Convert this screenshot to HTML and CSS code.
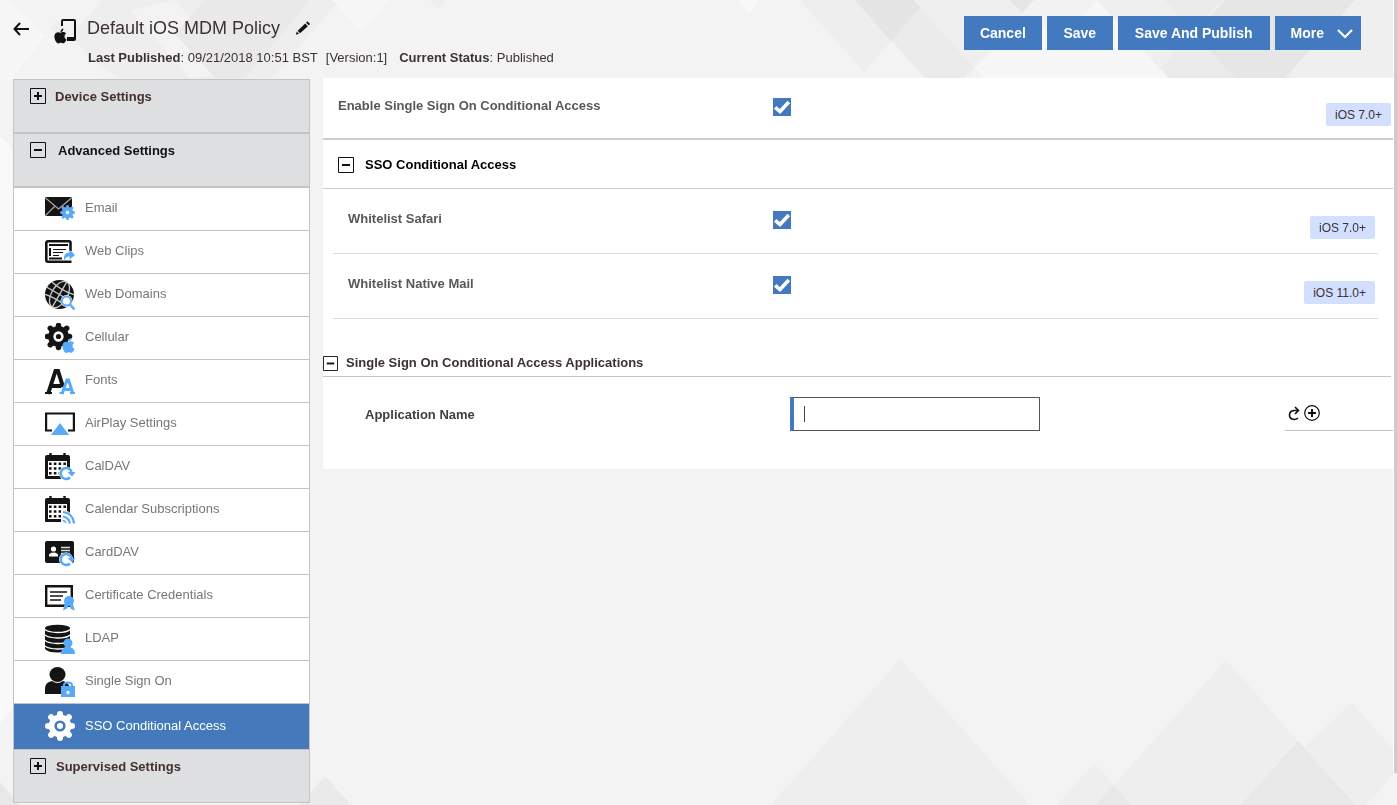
FILE: index.html
```html
<!DOCTYPE html>
<html lang="en">
<head>
<meta charset="utf-8">
<title>Default iOS MDM Policy</title>
<link rel="stylesheet" href="styles.css">
</head>
<body>
<svg class="backdrop" viewBox="0 0 1397 805" preserveAspectRatio="xMidYMid slice" aria-hidden="true">
  <rect width="1397" height="805" fill="#f3f3f3"/>
  <path fill="#eee" d="M12 0H340L270 80H120z"/>
  <path fill="#f7f7f7" d="M0 0H8L96 80H0zM332 0H390L361 32z"/>
  <path fill="#f3f3f3" d="M12 0 57 50 103 0zM13 78 57 20 108 78zM190 78 130 10 175 0 240 72z"/>
  <path fill="#e9e9e9" d="M205 0 175 34 215 78H245L310 0z"/>
  <path fill="#eee" d="M430 0H446L438 9z"/>
  <path fill="#f8f8f8" d="M738 0H760L749 13z"/>
  <path fill="#eee" d="M800 0H927L864 72z"/>
  <path fill="#ebebeb" d="M855 0H914L984 78H925z"/>
  <path fill="#e5e5e5" d="M855 0H927L891 41z"/>
  <path fill="#efefef" d="M914 0H1393V78H984z"/>
  <path fill="#e5e5e5" d="M1010 0H1034L1022 13z"/>
  <path fill="#f2f2f2" d="M1034 0H1097L1040 78H965z"/>
  <path fill="#f7f7f7" d="M1097 0 1168 78H983L975 68 1030 16 1060 40z"/>
  <path fill="#ebebeb" d="M1165 0H1222L1162 68 1170 78H1235z"/>
  <path fill="#e6e6e6" d="M1225 0H1355L1285 78H1235L1195 34z"/>
  <path fill="#eee" d="M900 659 1030 805H771zM1226 660 1355 805H1096zM1352 703 1397 753V770L1366 805H1241zM1094 763 1131 805H1057z"/>
  <path fill="#e8e8e8" d="M1298 741 1355 805H1241zM1113 785 1131 805H1096zM0 782 20 805H0z"/>
  <path fill="#eaeaea" d="M325 776 351 805H299z"/>
  <path fill="#f9f9f9" d="M0 135 13 150V709L0 723z"/>
</svg>

<svg class="defs" aria-hidden="true">
  <defs>
    <g id="gear-shape">
      <circle r="8.500" fill="none" stroke="currentColor" stroke-width="5.800"/>
      <g stroke="currentColor" stroke-width="6" stroke-linecap="round">
        <path d="M0-10V-12M0 10V12M10 0H12M-10 0H-12M7.500-7.500 8.900-8.900M-7.500-7.500-8.900-8.900M7.500 7.500 8.900 8.900M-7.500 7.500-8.900 8.900"/>
      </g>
    </g>
    <path id="apple" d="M12.152 6.896c-.948 0-2.415-1.078-3.96-1.040-2.040.027-3.910 1.183-4.961 3.014-2.117 3.675-.546 9.103 1.519 12.090 1.013 1.454 2.208 3.090 3.792 3.039 1.520-.065 2.090-.987 3.935-.987 1.831 0 2.350.987 3.960.948 1.637-.026 2.676-1.480 3.676-2.948 1.156-1.688 1.636-3.325 1.662-3.415-.039-.013-3.182-1.221-3.220-4.857-.026-3.040 2.480-4.494 2.597-4.559-1.429-2.090-3.623-2.324-4.390-2.376-2-.156-3.675 1.090-4.610 1.090zM15.530 3.830c.843-1.012 1.400-2.427 1.245-3.830-1.207.052-2.662.805-3.532 1.818-.78.896-1.454 2.338-1.273 3.714 1.338.104 2.715-.688 3.559-1.701"/>
    <g id="calendar">
      <path fill="#141414" d="M0 5Q0 3 2 3H23Q25 3 25 5V26Q25 27 24 27H1Q0 27 0 26z"/>
      <path stroke="#141414" stroke-width="2.400" d="M5.500 1V5M19.500 1V5"/>
      <path fill="#fff" d="M3 9H22V24H3z"/>
      <path stroke="#141414" stroke-width="2.600" stroke-dasharray="2.600 2.200" d="M4 11.800H22M4 16.500H22M4 21.200H22"/>
    </g>
    <g id="sync">
      <circle cx="21" cy="21.500" r="7" fill="#fff"/>
      <path fill="none" stroke="#58a9f8" stroke-width="2.600" d="M25 25.500A5.500 5.500 0 1 1 26.500 20"/>
      <path fill="#58a9f8" d="M22.500 20H30.500L27 24.500z"/>
    </g>
    <path id="tick" fill="none" stroke="#fff" stroke-width="3.600" d="M2.200 9.300 7 13.500 15.800 4"/>
    <g id="minus" fill="none" stroke="#111">
      <path d="M.5.5H15.500V15.500H.5z"/><path stroke-width="2" d="M4 8H12"/>
    </g>
    <g id="plus" fill="none" stroke="#111">
      <path d="M.5.5H15.500V15.500H.5z"/><path stroke-width="2" d="M4 8H12M8 4V12"/>
    </g>
  </defs>
</svg>

<div class="page">
  <header class="header">
    <button class="icon-button back" aria-label="Back"><svg width="16" height="14" viewBox="0 0 16 14"><path fill="none" stroke="#111" stroke-width="2" d="M7 1 1.500 7 7 13M1.500 7H16"/></svg></button>
    <svg class="device" width="24" height="26" viewBox="0 0 24 26" aria-hidden="true">
      <path fill="#111" fill-rule="evenodd" d="M9 1H20Q22 1 22 3V21Q22 23 20 23H13V19H20V3H9V8H7V3Q7 1 9 1z"/>
      <use href="#apple" transform="translate(-1 10.500) scale(.62)" fill="#111"/>
    </svg>
    <div class="heading">
      <div class="title-line">
        <h1>Default iOS MDM Policy</h1>
        <button class="icon-button" aria-label="Edit name"><svg width="16" height="16" viewBox="0 0 18 17"><path fill="#111" d="M1 16 2 12.500 4.500 15zM3 11.500 11.500 3.500 14.500 6.500 5.700 14.300zM12.500 2.500 14 1 17 4 15.500 5.500z"/></svg></button>
      </div>
      <p class="status"><span><b>Last Published</b>: 09/21/2018 10:51 BST</span><span>[Version:1]</span><span class="current"><b>Current Status</b>: Published</span></p>
    </div>
    <div class="actions">
      <button class="button">Cancel</button>
      <button class="button">Save</button>
      <button class="button wide">Save And Publish</button>
      <button class="button more">More <svg width="16" height="10" viewBox="0 0 16 10"><path fill="none" stroke="#fff" stroke-width="2.200" d="M1 1 8 8 15 1"/></svg></button>
    </div>
  </header>

  <div class="columns">
    <nav class="sidebar">
      <button class="group"><svg width="16" height="16"><use href="#plus"/></svg>Device Settings</button>
      <button class="group open"><svg width="16" height="16"><use href="#minus"/></svg>Advanced Settings</button>
      <a class="item" href="#email"><svg viewBox="0 0 30 30">
        <path fill="#141414" d="M0 3H27V22H0z"/><path fill="none" stroke="#aaa" stroke-width="1.200" d="M0 3.500 13.500 15 27 3.500M0 22 10 12M27 22 17 12"/>
        <g transform="translate(22.500 18.500) scale(.5)" color="#58a9f8"><circle r="8" fill="#58a9f8"/><use href="#gear-shape"/><circle r="3.500" fill="#fff"/></g></svg><span>Email</span></a>
      <a class="item" href="#clips"><svg viewBox="0 0 30 30">
        <path fill="none" stroke="#141414" stroke-width="2.600" d="M25.500 14V5.500Q25.500 4.300 24 4.300H3Q1.300 4.300 1.300 6V23Q1.300 24.700 3 24.700H26.500"/>
        <path stroke="#141414" stroke-width="2" d="M4 8H23M5 11V19M4 21.500H17"/><path stroke="#141414" stroke-width="1.200" d="M8 12.500H21M8 15.500H18M8 18.500H14"/>
        <path fill="#58a9f8" d="M19 24Q18 15.500 24.500 15.500V12.500L30 18 24.500 22.500V19.500Q20.500 19.500 19 24z"/></svg><span>Web Clips</span></a>
      <a class="item" href="#domains"><svg viewBox="0 0 30 30">
        <circle cx="14.500" cy="14.500" r="14.500" fill="#141414"/>
        <g fill="none" stroke="#ccc" stroke-width="1.300" transform="rotate(30 14.500 14.500)"><path d="M14.500 0V29"/><ellipse cx="14.500" cy="14.500" rx="8" ry="14.500"/><path d="M0 14.500H29M2 7.500Q14.500 10 27 7.500M2 21.500Q14.500 19 27 21.500"/></g>
        <circle cx="21.500" cy="21" r="6" fill="#fff"/><circle cx="21.500" cy="21" r="4.600" fill="#fff" stroke="#58a9f8" stroke-width="2"/><path stroke="#58a9f8" stroke-width="2.500" d="M25 24.500 29.500 29.500"/></svg><span>Web Domains</span></a>
      <a class="item" href="#cellular"><svg viewBox="0 0 30 30">
        <g transform="translate(13.500 13.500) scale(.92)" color="#141414"><use href="#gear-shape"/><circle r="2.800" fill="#141414"/></g>
        <use href="#apple" transform="translate(16 15) scale(.62)" fill="#58a9f8"/></svg><span>Cellular</span></a>
      <a class="item" href="#fonts"><svg viewBox="0 0 30 30">
        <path fill="none" stroke="#141414" stroke-width="4" d="M3 28 10.500 5H13L18 21M7 20H16"/><path stroke="#141414" stroke-width="2" d="M0 27H7"/>
        <path fill="none" stroke="#58a9f8" stroke-width="3" d="M17 28 22 14H23.500L28 28M19 23.500H26"/><path stroke="#58a9f8" stroke-width="2" d="M14.500 27H19M25 27H30"/></svg><span>Fonts</span></a>
      <a class="item" href="#airplay"><svg viewBox="0 0 30 30">
        <path fill="none" stroke="#141414" stroke-width="2.200" d="M7 21.500H1.100V4.500H28.900V21.500H23"/><path fill="#58a9f8" d="M15 14 24 26H6z"/></svg><span>AirPlay Settings</span></a>
      <a class="item" href="#caldav"><svg viewBox="0 0 30 30"><use href="#calendar"/><use href="#sync"/></svg><span>CalDAV</span></a>
      <a class="item" href="#subscriptions"><svg viewBox="0 0 30 30"><use href="#calendar"/>
        <path fill="#fff" d="M16 14Q29 16 30 29H16z"/><path fill="none" stroke="#58a9f8" stroke-width="2.200" d="M18 17Q28 18 29 28.500M18 21.500Q24 22.500 25 28.500"/><path fill="#58a9f8" d="M17.500 24.500Q21 25 21.500 28.500L17.500 26z"/></svg><span>Calendar Subscriptions</span></a>
      <a class="item" href="#carddav"><svg viewBox="0 0 30 30">
        <rect y="3" width="29" height="22" rx="2" fill="#141414"/><circle cx="8.500" cy="11" r="2.600" fill="#fff"/><path fill="#fff" d="M4 18.500V17Q4 15 8.500 14.500 13 15 13 17V18.500z"/><path stroke="#ddd" stroke-width="1.400" d="M16 9.500H25M16 12.500H25M16 15.500H25"/><use href="#sync"/></svg><span>CardDAV</span></a>
      <a class="item" href="#certificates"><svg viewBox="0 0 30 30">
        <path fill="#fff" stroke="#141414" stroke-width="2.400" d="M1.200 5.200H26.800V24.800H1.200z"/><path stroke="#141414" stroke-width="1.300" d="M5 11H22M5 15H18M5 19H16"/>
        <path fill="#58a9f8" d="M20 21 18 29.500 22 27.500 24 24 26 28 30 29.500 27 21z"/><circle cx="24" cy="20" r="5" fill="#58a9f8"/></svg><span>Certificate Credentials</span></a>
      <a class="item" href="#ldap"><svg viewBox="0 0 30 30">
        <path fill="#141414" d="M0 4V25Q3 28.500 12.500 28.500 22 28.500 25 25V4z"/><ellipse cx="12.500" cy="4" rx="12.500" ry="3.200" fill="#141414"/>
        <path fill="none" stroke="#fff" stroke-width="1.300" d="M0 5.500Q3 8.500 12.500 8.500T25 5.500M0 11Q3 14 12.500 14T25 11M0 16.500Q3 19.500 12.500 19.500T25 16.500M0 22Q3 25 12.500 25T25 22"/>
        <circle cx="23" cy="19" r="4.500" fill="#58a9f8"/><path fill="#58a9f8" d="M16 30Q16 23 23 23T30 30z"/></svg><span>LDAP</span></a>
      <a class="item" href="#sso"><svg viewBox="0 0 30 30">
        <ellipse cx="12.500" cy="7.500" rx="8" ry="7.500" fill="#141414"/><path fill="#141414" d="M0 27V22Q0 15 7 14 12.500 18 18 14 24 15 25 22V27z"/>
        <rect x="16" y="19" width="14" height="11" fill="#58a9f8"/><path fill="none" stroke="#58a9f8" stroke-width="2.200" d="M19 20V18.500Q19 15.500 23 15.500T27 18.500V20"/><circle cx="23" cy="25.500" r="1.700" fill="#fff"/></svg><span>Single Sign On</span></a>
      <a class="item active" href="#access" aria-current="page"><svg viewBox="0 0 30 30"><g transform="translate(15 15)" color="#fff"><use href="#gear-shape"/><circle r="3" fill="#fff"/></g></svg><span>SSO Conditional Access</span></a>
      <button class="group last"><svg width="16" height="16"><use href="#plus"/></svg>Supervised Settings</button>
    </nav>

    <main class="content">
      <div class="row first">
        <label for="enable">Enable Single Sign On Conditional Access</label>
        <span class="check"><input type="checkbox" id="enable" checked><svg width="18" height="18"><use href="#tick"/></svg></span>
        <span class="badge">iOS 7.0+</span>
      </div>
      <h2 class="section"><button class="icon-button" aria-label="Collapse SSO Conditional Access"><svg width="16" height="16"><use href="#minus"/></svg></button>SSO Conditional Access</h2>
      <div class="rows">
        <div class="row">
          <label for="safari">Whitelist Safari</label>
          <span class="check"><input type="checkbox" id="safari" checked><svg width="18" height="18"><use href="#tick"/></svg></span>
          <span class="badge">iOS 7.0+</span>
        </div>
        <div class="row">
          <label for="mail">Whitelist Native Mail</label>
          <span class="check"><input type="checkbox" id="mail" checked><svg width="18" height="18"><use href="#tick"/></svg></span>
          <span class="badge">iOS 11.0+</span>
        </div>
      </div>
      <h2 class="subsection"><button class="icon-button" aria-label="Collapse applications"><svg width="15" height="15" viewBox="0 0 16 16"><use href="#minus"/></svg></button>Single Sign On Conditional Access Applications</h2>
      <div class="application">
        <label for="app">Application Name</label>
        <span class="field"><input type="text" id="app"></span>
        <div class="tools">
          <button class="icon-button" aria-label="Reset"><svg width="12" height="16" viewBox="0 0 12 16"><path fill="none" stroke="#111" stroke-width="1.600" d="M10.500 5.500H6Q1.500 6 1.500 10T6 14.500Q8.500 14.500 10 13M7 2 10.500 5.500 7 9"/></svg></button>
          <button class="icon-button" aria-label="Add application"><svg width="16" height="16" viewBox="0 0 16 16"><circle cx="8" cy="8" r="7.300" fill="none" stroke="#111" stroke-width="1.200"/><path stroke="#111" stroke-width="2" d="M4 8H12M8 4V12"/></svg></button>
        </div>
      </div>
    </main>
  </div>
</div>
<div class="scroll-thumb"></div>
</body>
</html>
```

FILE: styles.css
```css
* { box-sizing: border-box; }

body {
  margin: 0;
  background: #f3f3f3;
  color: #3c3234;
  font: 13px/20px "Liberation Sans", Arial, sans-serif;
}

button, input { font: inherit; }
h1, h2, p { margin: 0; }
svg { display: block; flex: none; }

.backdrop { position: fixed; inset: 0; z-index: -1; width: 100%; height: 100%; }
.defs { position: absolute; width: 0; height: 0; }

.scroll-thumb {
  position: fixed;
  top: 0;
  right: 0;
  width: 4px;
  height: 96%;
  background: #ccc;
  border-left: 1px solid #fff;
}

.page { padding-right: 4px; }

.icon-button { padding: 0; border: 0; background: none; cursor: pointer; }

.header {
  display: flex;
  align-items: flex-start;
  min-height: 78px;
  padding: 16px 32px 0 13px;
}
.back { margin-top: 6px; }
.device { margin: 2px 9px 0 25px; }
.heading { flex: 1; }
.title-line { display: flex; align-items: center; gap: 15px; height: 24px; }
.heading h1 { font-size: 18px; line-height: 24px; font-weight: 400; }
.status { display: flex; gap: 8px; padding: 8px 0 0 1px; }
.status .current { margin-left: 4px; }

.actions { display: flex; gap: 5px; }
.button {
  display: flex;
  align-items: center;
  justify-content: center;
  min-width: 66px;
  height: 34px;
  padding: 0 16px;
  border: 0;
  background: #4379be;
  color: #fff;
  font-size: 14px;
  font-weight: 700;
}
.button.wide { padding: 0 17px; }
.button.more { gap: 13px; padding: 0 8px 0 16px; }
.button.more svg { margin-top: 2px; }

.columns { display: flex; align-items: flex-start; gap: 13px; padding-left: 13px; }

.sidebar { width: 297px; flex: none; margin-top: 1px; border: 1px solid #c4c4c4; background: #fff; }
.group {
  display: flex;
  align-items: flex-start;
  gap: 9px;
  width: 100%;
  height: 54px;
  padding: 8px 16px;
  border: 0;
  border-bottom: 2px solid #c4c4c4;
  background: #dddfe1;
  color: #44302f;
  font-weight: 700;
  line-height: 18px;
}
.group.open { gap: 12px; color: #111; }
.group.last { height: 52px; border-bottom: 0; gap: 10px; }

.item {
  display: flex;
  align-items: center;
  gap: 10px;
  height: 43px;
  padding: 0 31px;
  border-bottom: 1px solid #c4c4c4;
  color: #777;
  text-decoration: none;
}
.item svg { width: 30px; height: 30px; }
.item span { padding-bottom: 2px; }
.item.active { height: 46px; padding-bottom: 2px; background: #447abc; color: #fff; }
.item.active span { padding-bottom: 0; }

.content { flex: 1; min-width: 0; padding-bottom: 38px; background: #fff; }
.row {
  display: grid;
  grid-template-columns: 425px 1fr auto;
  align-items: start;
  height: 65px;
  padding: 19px 3px 0 15px;
  border-bottom: 1px solid #ddd;
}
.row.first {
  grid-template-columns: 435px 1fr auto;
  height: 62px;
  padding: 17px 2px 0 15px;
  border-bottom: 2px solid #ccc;
}
.rows { padding: 0 15px 0 10px; }
label { color: #58585a; font-weight: 700; line-height: 22px; }

.check { display: grid; width: 18px; height: 18px; margin-top: 3px; }
.check > * { grid-area: 1 / 1; }
.check input { appearance: none; width: 18px; height: 18px; margin: 0; background: #4379be; }
.check svg { pointer-events: none; }

.badge {
  height: 23px;
  margin-top: 8px;
  padding: 0 9px;
  border-radius: 2px;
  background: #d3dffe;
  font-size: 12px;
  line-height: 24px;
}

.section {
  display: flex;
  align-items: center;
  gap: 11px;
  height: 49px;
  padding: 2px 0 0 15px;
  border-bottom: 1px solid #ccc;
  color: #000;
  font-size: 13px;
}
.subsection {
  display: flex;
  align-items: center;
  gap: 8px;
  margin: 34px 2px 0 0;
  padding-bottom: 3px;
  border-bottom: 1px solid #c4c4c4;
  font-size: 13px;
}

.application {
  display: grid;
  grid-template-columns: 425px 1fr 108px;
  align-items: start;
  padding: 20px 0 0 42px;
}
.application label { color: #3f4045; line-height: 36px; }
.application > * { max-height: 34px; }
.field { position: relative; }
.field input {
  width: 250px;
  height: 34px;
  padding: 0 10px;
  border: 1px solid #555;
  border-left: 4px solid #4379be;
  background: #fff;
  display: block;
  outline: 0;
}
.field::after {
  content: "";
  position: absolute;
  top: 9px;
  left: 14px;
  width: 1px;
  height: 16px;
  background: #444;
}
.tools {
  display: flex;
  align-items: center;
  gap: 4px;
  height: 34px;
  padding: 0 0 1px 3px;
  border-bottom: 1px solid #c4c4c4;
}
```
